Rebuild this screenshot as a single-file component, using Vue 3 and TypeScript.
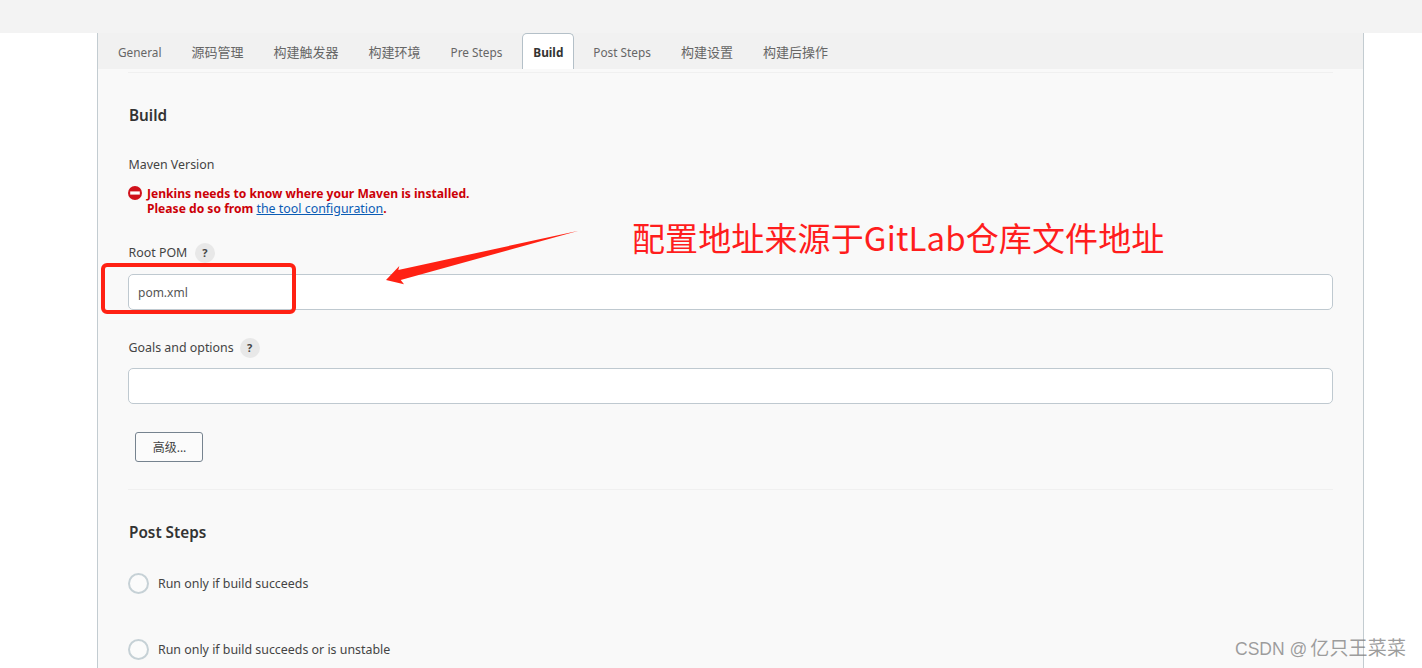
<script setup lang="ts">
interface Tab {
  label: string
  cjk?: boolean
  active?: boolean
}

const tabs: Tab[] = [
  { label: 'General' },
  { label: '源码管理', cjk: true },
  { label: '构建触发器', cjk: true },
  { label: '构建环境', cjk: true },
  { label: 'Pre Steps' },
  { label: 'Build', active: true },
  { label: 'Post Steps' },
  { label: '构建设置', cjk: true },
  { label: '构建后操作', cjk: true }
]

const radios: string[] = ['Run only if build succeeds', 'Run only if build succeeds or is unstable']
</script>

<template>
  <div class="page">
    <div class="topbar"></div>
    <div class="panel">
      <div class="tabs">
        <div v-for="tab in tabs" :key="tab.label" class="tab" :class="{ active: tab.active, cjk: tab.cjk }">{{ tab.label }}</div>
      </div>
      <div class="body">
        <div class="rule first"></div>
        <h2 class="title build-title">Build</h2>
        <div class="label maven">Maven Version</div>
        <div class="error">
          <svg class="error-icon" width="14" height="14" viewBox="0 0 14 14">
            <circle cx="7" cy="7" r="7" fill="#d0111b" />
            <rect x="2.2" y="5.4" width="9.6" height="3.2" fill="#fff" />
          </svg>
          <div>
            <div>Jenkins needs to know where your Maven is installed.</div>
            <div>Please do so from <a href="#" class="link">the tool configuration</a>.</div>
          </div>
        </div>
        <div class="label with-help root-label">Root POM <span class="help">?</span></div>
        <input class="field" type="text" value="pom.xml" />
        <div class="label with-help goals-label">Goals and options <span class="help">?</span></div>
        <input class="field goals-field" type="text" />
        <button class="adv" type="button">高级...</button>
        <div class="rule second"></div>
        <h2 class="title post-title">Post Steps</h2>
        <div v-for="(text, i) in radios" :key="text" class="radio" :class="{ next: i > 0 }">
          <span class="dot"></span>{{ text }}
        </div>
      </div>
    </div>

    <!-- 标注 -->
    <div class="mark-box"></div>
    <svg class="mark-arrow" width="200" height="60" viewBox="0 0 200 60">
      <polygon points="2,50 15.3,36 14.3,40 194.7,0.7 16.7,50 20,54.3" fill="#ff2113" />
    </svg>
    <div class="mark-text">配置地址来源于GitLab仓库文件地址</div>
    <div class="watermark">CSDN @<span class="watermark-name">亿只王菜菜</span></div>
  </div>
</template>

<style scoped>
.page {
  position: relative;
  height: 668px;
  overflow: hidden;
  background: #fff;
  font-family: "Noto Sans", "Noto Sans CJK SC", sans-serif;
  font-size: 12.4px;
  color: #333;
}

.topbar {
  height: 33px;
  background: #f3f3f3;
}

.panel {
  width: 1265px;
  margin-left: 97px;
  height: 635px;
  border-left: 1px solid #c3ccd1;
  border-right: 1px solid #c3ccd1;
  background: #f9f9f9;
}

.tabs {
  display: flex;
  align-items: flex-end;
  gap: 30px;
  height: 36px;
  padding-left: 20px;
  background: #f1f1f1;
}

.tab {
  height: 35px;
  line-height: 37px;
  font-size: 11.8px;
  color: #666;
  white-space: nowrap;
}

.tab.cjk {
  font-size: 13px;
}

.tab.active {
  margin: 0 -11px 0 -10px;
  padding: 0 10px;
  border: 1px solid #b4c0c8;
  border-bottom: none;
  border-radius: 5px 5px 0 0;
  background: #fff;
  color: #333;
  font-weight: 700;
}

.body {
  padding: 0 30px;
}

.rule {
  height: 1px;
  background: #f0f0f0;
}

.rule.first {
  margin-top: 3px;
}

.rule.second {
  margin-top: 27px;
}

.title {
  margin: 0 0 0 1px;
  font-size: 15.3px;
  font-weight: 600;
  line-height: 22px;
  color: #333;
}

.build-title {
  margin-top: 31px;
}

.post-title {
  margin-top: 31px;
}

.label {
  padding-left: 0.5px;
  line-height: 18px;
  color: #444;
}

.maven {
  margin-top: 30px;
}

.error {
  display: flex;
  gap: 5px;
  margin-top: 12px;
  line-height: 15px;
  font-size: 12.1px;
  font-weight: 700;
  color: #cc0007;
}

.error-icon {
  flex: none;
}

.link {
  font-size: 12.4px;
  font-weight: 400;
  color: #0b5cb5;
  text-decoration: underline;
}

.with-help {
  display: flex;
  align-items: center;
  gap: 6px;
}

.root-label {
  gap: 7.5px;
  margin-top: 27px;
}

.goals-label {
  margin-top: 28px;
}

.help {
  width: 20px;
  height: 20px;
  border-radius: 50%;
  background: #e8e8e8;
  text-align: center;
  line-height: 20px;
  font-size: 11px;
  font-weight: 700;
  color: #444;
}

.field {
  display: block;
  box-sizing: border-box;
  width: 100%;
  height: 36px;
  margin-top: 11px;
  padding: 0 9px;
  border: 1px solid #bfc9d0;
  border-radius: 5px;
  background: #fff;
  font-family: inherit;
  font-size: 12px;
  color: #555;
  outline: none;
}

.goals-field {
  margin-top: 10px;
}

.adv {
  display: block;
  box-sizing: border-box;
  width: 68px;
  height: 30px;
  margin: 28px 0 0 7px;
  padding: 0 0 0 1px;
  border: 1px solid #76838f;
  border-radius: 3px;
  background: #fbfbfb;
  font-family: inherit;
  font-size: 12px;
  color: #444;
}

.radio {
  display: flex;
  align-items: center;
  gap: 9px;
  height: 22px;
  margin-top: 29px;
  color: #444;
}

.radio.next {
  margin-top: 44px;
}

.dot {
  box-sizing: border-box;
  width: 21px;
  height: 21px;
  border: 2px solid #c6d1d6;
  border-radius: 50%;
  background: #fbfbfb;
}

.mark-box {
  position: absolute;
  left: 101px;
  top: 263px;
  box-sizing: border-box;
  width: 195px;
  height: 51px;
  border: 4px solid #ff2113;
  border-radius: 6px;
}

.mark-arrow {
  position: absolute;
  left: 384px;
  top: 230px;
}

.mark-text {
  position: absolute;
  left: 632px;
  top: 214px;
  font-family: "Noto Sans CJK SC", "Noto Sans", sans-serif;
  font-size: 33px;
  line-height: 46px;
  letter-spacing: 0.12px;
  color: #ff1d1d;
  white-space: nowrap;
}

.watermark {
  position: absolute;
  left: 1235px;
  top: 636px;
  font-family: "Liberation Sans", "Noto Sans CJK SC", sans-serif;
  font-size: 17.5px;
  line-height: 26px;
  color: rgba(120, 120, 120, 0.72);
  white-space: nowrap;
}

.watermark-name {
  margin-left: 3px;
  font-size: 19px;
  letter-spacing: 0.2px;
}
</style>
